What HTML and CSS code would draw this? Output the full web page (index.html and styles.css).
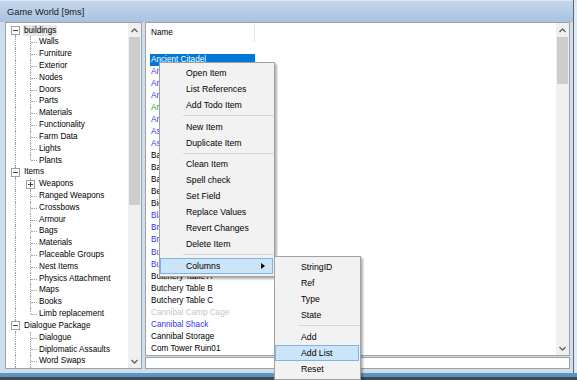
FILE: index.html
```html
<!DOCTYPE html>
<html lang="en">
<head>
  <meta charset="UTF-8">
  <title>Game World [9ms]</title>
  <link rel="stylesheet" href="styles.css">
</head>
<body>
  <div class="window">
    <div class="titlebar">Game World [9ms]</div>

    <div class="panes">
      <!-- category tree -->
      <div class="tree-pane">
        <div class="tree">
          <div class="node"><span class="cell v-bot"><span class="pm"></span></span><span class="label sel">buildings</span></div>
          <div class="node"><span class="cell v"></span><span class="cell v h"></span><span class="label">Walls</span></div>
          <div class="node"><span class="cell v"></span><span class="cell v h"></span><span class="label">Furniture</span></div>
          <div class="node"><span class="cell v"></span><span class="cell v h"></span><span class="label">Exterior</span></div>
          <div class="node"><span class="cell v"></span><span class="cell v h"></span><span class="label">Nodes</span></div>
          <div class="node"><span class="cell v"></span><span class="cell v h"></span><span class="label">Doors</span></div>
          <div class="node"><span class="cell v"></span><span class="cell v h"></span><span class="label">Parts</span></div>
          <div class="node"><span class="cell v"></span><span class="cell v h"></span><span class="label">Materials</span></div>
          <div class="node"><span class="cell v"></span><span class="cell v h"></span><span class="label">Functionality</span></div>
          <div class="node"><span class="cell v"></span><span class="cell v h"></span><span class="label">Farm Data</span></div>
          <div class="node"><span class="cell v"></span><span class="cell v h"></span><span class="label">Lights</span></div>
          <div class="node"><span class="cell v"></span><span class="cell v-top h"></span><span class="label">Plants</span></div>

          <div class="node"><span class="cell v"><span class="pm"></span></span><span class="label">Items</span></div>
          <div class="node"><span class="cell v"></span><span class="cell v"><span class="pm plus"></span></span><span class="label">Weapons</span></div>
          <div class="node"><span class="cell v"></span><span class="cell v h"></span><span class="label">Ranged Weapons</span></div>
          <div class="node"><span class="cell v"></span><span class="cell v h"></span><span class="label">Crossbows</span></div>
          <div class="node"><span class="cell v"></span><span class="cell v h"></span><span class="label">Armour</span></div>
          <div class="node"><span class="cell v"></span><span class="cell v h"></span><span class="label">Bags</span></div>
          <div class="node"><span class="cell v"></span><span class="cell v h"></span><span class="label">Materials</span></div>
          <div class="node"><span class="cell v"></span><span class="cell v h"></span><span class="label">Placeable Groups</span></div>
          <div class="node"><span class="cell v"></span><span class="cell v h"></span><span class="label">Nest Items</span></div>
          <div class="node"><span class="cell v"></span><span class="cell v h"></span><span class="label">Physics Attachment</span></div>
          <div class="node"><span class="cell v"></span><span class="cell v h"></span><span class="label">Maps</span></div>
          <div class="node"><span class="cell v"></span><span class="cell v h"></span><span class="label">Books</span></div>
          <div class="node"><span class="cell v"></span><span class="cell v-top h"></span><span class="label">Limb replacement</span></div>

          <div class="node"><span class="cell v"><span class="pm"></span></span><span class="label">Dialogue Package</span></div>
          <div class="node"><span class="cell v"></span><span class="cell v h"></span><span class="label">Dialogue</span></div>
          <div class="node"><span class="cell v"></span><span class="cell v h"></span><span class="label">Diplomatic Assaults</span></div>
          <div class="node"><span class="cell v"></span><span class="cell v h"></span><span class="label">Word Swaps</span></div>
          <div class="node"><span class="cell v"></span><span class="cell v h"></span><span class="label">World States</span></div>
        </div>
        <div class="vscroll tree-scroll">
          <div class="sb-btn"><svg width="7" height="5" viewBox="0 0 7 5"><path d="M0.5 4 L3.5 1 L6.5 4" fill="none" stroke="#606060" stroke-width="1.3"/></svg></div>
          <div class="sb-track"><div class="sb-thumb"></div></div>
          <div class="sb-btn"><svg width="7" height="5" viewBox="0 0 7 5"><path d="M0.5 1 L3.5 4 L6.5 1" fill="none" stroke="#606060" stroke-width="1.3"/></svg></div>
        </div>
      </div>

      <!-- item list -->
      <div class="right-pane">
        <div class="list-box">
          <div class="list">
            <div class="list-header"><div class="col-name">Name</div></div>
            <div class="rows">
              <div class="item sel">Ancient Citadel</div>
              <div class="item blue">Arach Nest</div>
              <div class="item blue">Arena</div>
              <div class="item blue">Armour Shop</div>
              <div class="item green">Armoury</div>
              <div class="item blue">Art Gallery</div>
              <div class="item blue">Ashland Dome</div>
              <div class="item blue">Ashland Tower</div>
              <div class="item">Bandit Camp</div>
              <div class="item">Bar</div>
              <div class="item">Barracks</div>
              <div class="item">Bed Shack</div>
              <div class="item">Big Tower</div>
              <div class="item blue">Black Desert City</div>
              <div class="item blue">Bridge</div>
              <div class="item blue">Broken Tower</div>
              <div class="item blue">Bugmaster Camp</div>
              <div class="item blue">Bunker</div>
              <div class="item">Butchery Table A</div>
              <div class="item">Butchery Table B</div>
              <div class="item">Butchery Table C</div>
              <div class="item dim">Cannibal Camp Cage</div>
              <div class="item blue">Cannibal Shack</div>
              <div class="item">Cannibal Storage</div>
              <div class="item">Com Tower Ruin01</div>
              <div class="item">Com Tower Ruin02</div>
            </div>
          </div>
          <div class="vscroll list-scroll">
            <div class="sb-btn"><svg width="7" height="5" viewBox="0 0 7 5"><path d="M0.5 4 L3.5 1 L6.5 4" fill="none" stroke="#606060" stroke-width="1.3"/></svg></div>
            <div class="sb-track"><div class="sb-thumb"></div></div>
            <div class="sb-btn"><svg width="7" height="5" viewBox="0 0 7 5"><path d="M0.5 1 L3.5 4 L6.5 1" fill="none" stroke="#606060" stroke-width="1.3"/></svg></div>
          </div>
        </div>
        <div class="filter"></div>
      </div>
    </div>
  </div>
  <div class="strip"></div>

  <!-- context menu -->
  <div class="menu ctx-menu">
    <div class="mi">Open Item</div>
    <div class="mi">List References</div>
    <div class="mi">Add Todo Item</div>
    <div class="sep"></div>
    <div class="mi">New Item</div>
    <div class="mi">Duplicate Item</div>
    <div class="sep"></div>
    <div class="mi">Clean Item</div>
    <div class="mi">Spell check</div>
    <div class="mi">Set Field</div>
    <div class="mi">Replace Values</div>
    <div class="mi">Revert Changes</div>
    <div class="mi">Delete Item</div>
    <div class="sep"></div>
    <div class="mi hot">Columns<span class="sub-arrow"></span></div>
  </div>

  <div class="menu sub-menu">
    <div class="mi">StringID</div>
    <div class="mi">Ref</div>
    <div class="mi">Type</div>
    <div class="mi">State</div>
    <div class="sep"></div>
    <div class="mi">Add</div>
    <div class="mi hot">Add List</div>
    <div class="mi">Reset</div>
  </div>
</body>
</html>
```

FILE: styles.css
```css
* {
  box-sizing: border-box;
}
body {
  margin: 0;
  width: 577px;
  height: 380px;
  overflow: hidden;
  background: #e3e8ee;
  font-family: "Liberation Sans", Arial, sans-serif;
  color: #000;
}
.window {
  width: 574px;
  height: 373px;
  display: flex;
  flex-direction: column;
  background: #cfdeee;
  border-right: 1px solid #56687a;
}
.titlebar {
  height: 22px;
  flex: none;
  padding-left: 7px;
  line-height: 23px;
  font-size: 9.3px;
  color: #1b1b1b;
  background: linear-gradient(#c5d7ed, #a8c2e1);
  border-top: 1px solid #dde7f2;
}
.panes {
  display: flex;
  height: 347px;
  padding-left: 5px;
}

/* tree */
.tree-pane {
  width: 137px;
  display: flex;
  background: #fff;
  border: 1px solid #a0a0a0;
  overflow: hidden;
}
.tree {
  width: 122px;
  padding: 1.6px 0 0 2px;
  overflow: hidden;
  font-size: 8.2px;
}
.node {
  display: flex;
  height: 11.82px;
  line-height: 11.82px;
  white-space: nowrap;
}
.cell {
  flex: none;
  width: 15px;
  position: relative;
}
.cell.v::before,
.cell.v-top::before,
.cell.v-bot::before {
  content: "";
  position: absolute;
  left: 7px;
  top: 0;
  bottom: 0;
  border-left: 1px dotted #a0a0a0;
}
.cell.v-top::before {
  bottom: 50%;
}
.cell.v-bot::before {
  top: 50%;
}
.cell.h::after {
  content: "";
  position: absolute;
  left: 8px;
  width: 6px;
  top: 50%;
  border-top: 1px dotted #a0a0a0;
}
.pm {
  position: absolute;
  left: 3px;
  top: 1.5px;
  width: 9px;
  height: 9px;
  background: #fff;
  border: 1px solid #a0a0a0;
  z-index: 1;
}
.pm::before {
  content: "";
  position: absolute;
  left: 1px;
  top: 3px;
  width: 5px;
  border-top: 1px solid #444;
}
.pm.plus::after {
  content: "";
  position: absolute;
  left: 3px;
  top: 1px;
  height: 5px;
  border-left: 1px solid #444;
}
.label {
  padding: 0 1px;
}
.label.sel {
  background: #e6e6e6;
}

/* scrollbars */
.vscroll {
  width: 13px;
  flex: none;
  display: flex;
  flex-direction: column;
  background: #f0f0f0;
}
.sb-btn {
  height: 14px;
  flex: none;
  display: flex;
  align-items: center;
  justify-content: center;
}
.sb-track {
  flex: 1;
}
.sb-thumb {
  margin: 0 1px;
  background: #cdcdcd;
}
.tree-scroll .sb-thumb {
  height: 168px;
}
.list-scroll .sb-thumb {
  height: 47px;
}

/* list */
.right-pane {
  width: 425px;
  margin-left: 3px;
  display: flex;
  flex-direction: column;
}
.list-box {
  height: 334px;
  display: flex;
  background: #fff;
  border: 1px solid #a0a0a0;
}
.list {
  flex: 1;
  overflow: hidden;
  font-size: 8.2px;
}
.list-header {
  height: 19px;
  display: flex;
}
.col-name {
  width: 109px;
  padding-left: 5px;
  line-height: 20px;
  border-right: 1px solid #e5e5e5;
}
.rows {
  padding: 12px 0 0 4px;
}
.item {
  width: 105px;
  height: 12.04px;
  line-height: 12.04px;
  padding-left: 1px;
  white-space: nowrap;
  overflow: hidden;
}
.item.sel {
  background: #0078d7;
  color: #fff;
}
.item.blue {
  color: #3434f4;
}
.item.green {
  color: #2f9e36;
}
.item.dim {
  color: #c6c6c6;
}
.filter {
  height: 12px;
  margin-top: 1px;
  background: #fff;
  border: 1px solid #a0a0a0;
}
.strip {
  height: 7px;
  background: #5f94c0;
  border-bottom: 3px solid #3d4a55;
}

/* menus */
.menu {
  position: absolute;
  background: #f2f2f2;
  border: 1px solid #a0a0a0;
  padding: 2px 0;
  font-size: 8.7px;
  box-shadow: 2px 2px 2px rgba(0, 0, 0, 0.3);
}
.ctx-menu {
  left: 159px;
  top: 62px;
  width: 116px;
}
.sub-menu {
  left: 274px;
  top: 256px;
  width: 87px;
}
.mi {
  height: 16px;
  line-height: 16px;
  padding-left: 26px;
  display: flex;
  align-items: center;
  justify-content: space-between;
  padding-right: 8px;
  white-space: nowrap;
}
.mi.hot {
  background: #cce4f7;
  border: 1px solid #7db4e6;
  padding-left: 25px;
  padding-right: 7px;
  margin-right: 1px;
}
.sub-arrow {
  width: 0;
  height: 0;
  border-left: 4px solid #000;
  border-top: 3px solid transparent;
  border-bottom: 3px solid transparent;
}
.sep {
  height: 5.5px;
  margin-left: 23px;
  background: linear-gradient(transparent 2px, #d7d7d7 2px, #d7d7d7 3px, transparent 3px);
}
```
